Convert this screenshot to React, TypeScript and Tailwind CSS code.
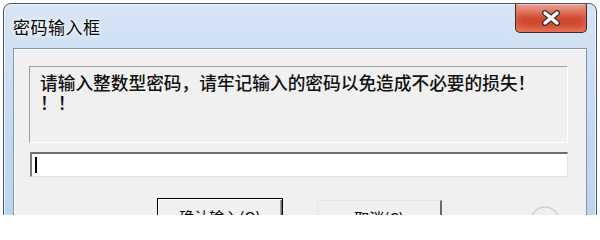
import React from "react";

function CloseGlyph() {
  return (
    <svg width="20" height="16" viewBox="0 0 20 16">
      <path d="M4 3 L16 13 M16 3 L4 13" stroke="#3d3535" strokeWidth="6" strokeLinecap="round" />
      <path d="M4 3 L16 13 M16 3 L4 13" stroke="#ffffff" strokeWidth="3.4" strokeLinecap="round" />
    </svg>
  );
}

export default function App() {
  return (
    <div className="relative w-[600px] h-[215px] overflow-hidden bg-white font-['Noto_Sans_CJK_SC',sans-serif] text-black">
      {/* Window frame */}
      <div className="mt-[3px] mx-[3px] h-[260px] flex flex-col rounded-t-[8px] border border-[#4a5668] bg-gradient-to-b from-[#d6e5f6] via-[#c4d9f0] to-[#b9d1ec] px-[9px] shadow-[inset_1px_1px_0_#eef5fc,inset_-1px_0_0_#eef5fc]">
        {/* Caption */}
        <div className="h-[44px] flex items-center">
          <span className="text-[17px] leading-none tracking-[0.5px] [text-shadow:0_0_6px_#ffffff,0_0_3px_#ffffff]">
            密码输入框
          </span>
        </div>

        {/* Client area */}
        <div className="flex-1 border border-[#7f95af] bg-[#f0f0f0] pl-[15px] pr-[18px] pt-[17px] shadow-[inset_1px_1px_0_#ffffff]">
          {/* Static label, sunken edge */}
          <div className="h-[77px] border-t border-l border-[#a0a0a0] border-b border-r border-b-white border-r-white px-[10px] pt-[5px] text-[17.7px] leading-[21px] font-medium text-[#111]">
            <div>请输入整数型密码，请牢记输入的密码以免造成不必要的损失！</div>
            <div className="-mt-[1px]">！！</div>
          </div>

          {/* Edit box */}
          <div className="mt-[9px] ml-[1px] h-[25px] flex items-center border-t-2 border-l-2 border-t-[#6e6e6e] border-l-[#7a7a7a] border-b border-r border-b-[#e3e3e3] border-r-[#e3e3e3] bg-white pl-[3px]">
            <div className="w-[2px] h-[16px] bg-black" />
          </div>

          {/* Buttons */}
          <div className="mt-[21px] flex gap-[34px] pl-[128px]">
            <button className="w-[126px] h-[30px] border border-black bg-[#f0f0f0] shadow-[inset_1px_1px_0_#ffffff,inset_-1px_-1px_0_#696969,inset_-2px_-2px_0_#a0a0a0] text-[15px] pt-[7px] leading-none">
              确认输入(<span className="underline">O</span>)
            </button>
            <button className="w-[125px] h-[30px] mt-[2px] border-t border-l border-[#e6e6e6] border-r-2 border-b-2 border-r-[#6a6a6a] border-b-[#6a6a6a] bg-[#f0f0f0] text-[15px] pt-[6px] leading-none">
              取消(<span className="underline">C</span>)
            </button>
          </div>
        </div>
      </div>

      {/* Close caption button */}
      <div className="absolute left-[515px] top-[4px] w-[72px] h-[29px] flex items-center justify-center rounded-b-[5px] border border-t-0 border-[#3e2a28] bg-gradient-to-b from-[#e7a697] via-[#d24a32] to-[#c9442c] shadow-[inset_0_-4px_6px_#e9785c,inset_0_1px_0_#f3c7bb]">
        <CloseGlyph />
      </div>

      {/* faint watermark circle */}
      <svg className="absolute left-[528px] top-[204px]" width="34" height="20" viewBox="0 0 34 20">
        <circle cx="17" cy="17" r="14" fill="none" stroke="#cfcfcf" strokeWidth="1.5" />
        <path d="M13 12 L13 20 M21 12 L21 20 M13 14 L21 14" stroke="#d8d8d8" strokeWidth="1.2" />
      </svg>
    </div>
  );
}
